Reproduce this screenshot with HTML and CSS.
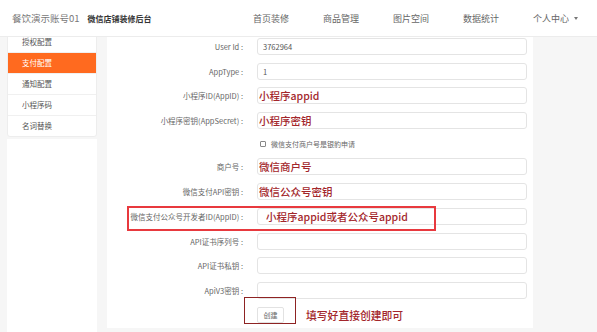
FILE: index.html
```html
<!DOCTYPE html>
<html lang="zh-CN">
  <head>
    <meta charset="UTF-8" />
    <title>支付配置</title>
    <link rel="stylesheet" href="styles.css">
  </head>
  <body>
    <div class="header">
      <span class="brand">餐饮演示账号01</span>
      <span class="brand-sub">微信店铺装修后台</span>
      <div class="nav">
        <a>首页装修</a>
        <a>商品管理</a>
        <a>图片空间</a>
        <a>数据统计</a>
        <a class="dropdown">个人中心<i class="caret"></i></a>
      </div>
    </div>
    <div class="layout">
      <div class="sidebar">
        <div class="menu-wrap">
          <ul class="menu">
            <li>授权配置</li>
            <li class="active">支付配置</li>
            <li>通知配置</li>
            <li>小程序码</li>
            <li>名词替换</li>
          </ul>
        </div>
        <div class="sidebar-fill"></div>
      </div>
      <div class="main">
        <div class="row">
          <label>User Id :</label>
          <input type="text" value="3762964" />
        </div>
        <div class="row">
          <label>AppType :</label>
          <input type="text" value="1" />
        </div>
        <div class="row">
          <label>小程序ID(AppID) :</label>
          <input type="text" class="note" value="小程序appid" />
        </div>
        <div class="row">
          <label>小程序密钥(AppSecret) :</label>
          <input type="text" class="note" value="小程序密钥" />
        </div>
        <div class="row check-row">
          <input type="checkbox" class="check" />
          <span>微信支付商户号是银豹申请</span>
        </div>
        <div class="row">
          <label>商户号 :</label>
          <input type="text" class="note" value="微信商户号" />
        </div>
        <div class="row">
          <label>微信支付API密钥 :</label>
          <input type="text" class="note" value="微信公众号密钥" />
        </div>
        <div class="row">
          <label>微信支付公众号开发者ID(AppID) :</label>
          <input type="text" class="note wide" value="小程序appid或者公众号appid" />
        </div>
        <div class="row">
          <label>API证书序列号 :</label>
          <input type="text" />
        </div>
        <div class="row">
          <label>API证书私钥 :</label>
          <input type="text" />
        </div>
        <div class="row">
          <label>ApiV3密钥 :</label>
          <input type="text" />
        </div>
        <div class="row button-row">
          <button class="btn">创建</button>
          <span class="hint">填写好直接创建即可</span>
        </div>

        <div class="mark mark-red"></div>
        <div class="mark mark-dark"></div>
      </div>
    </div>
  </body>
</html>
```

FILE: styles.css
```css
body {
  margin: 0;
  height: 332px;
  overflow: hidden;
  background: #f6f6f6;
  font-family: "Noto Sans CJK SC", "Noto Sans", sans-serif;
  color: #555;
}
.header {
  height: 36px;
  background: #fff;
  border-bottom: 1px solid #ececec;
  display: flex;
  align-items: center;
}
.brand {
  margin-left: 12px;
  font-size: 9.5px;
  color: #777;
}
.brand-sub {
  margin-left: 8px;
  font-size: 8px;
  font-weight: bold;
  color: #333;
}
.nav {
  margin-left: auto;
  margin-right: 19px;
  display: flex;
  gap: 34px;
}
.nav a {
  font-size: 9px;
  color: #666;
  display: flex;
  align-items: center;
}
.caret {
  margin-left: 5px;
  border-left: 2.5px solid transparent;
  border-right: 2.5px solid transparent;
  border-top: 3px solid #777;
}
.layout {
  display: flex;
  height: 295px;
}
.sidebar {
  width: 90px;
  margin-left: 7px;
  display: flex;
  flex-direction: column;
}
.menu-wrap {
  overflow: hidden;
}
.menu {
  list-style: none;
  margin: -6px 0 0;
  padding: 0;
  background: #fff;
  border: 1px solid #ededed;
  border-radius: 3px;
}
.menu li {
  height: 20px;
  line-height: 20px;
  padding-left: 14px;
  font-size: 7.5px;
  color: #555;
  border-bottom: 1px solid #f0f0f0;
}
.menu li:last-child {
  border-bottom: none;
}
.menu li.active {
  background: #ff6a1f;
  color: #fff;
}
.sidebar-fill {
  flex: 1;
  margin-top: 2px;
  background: #fff;
}
.main {
  position: relative;
  margin-left: 10px;
  width: 426px;
  height: 291px;
  padding-top: 1px;
  box-sizing: border-box;
  background: #fff;
}
.row {
  display: flex;
  align-items: center;
  height: 17px;
  margin-bottom: 7.7px;
}
.row label {
  width: 136px;
  margin-right: 14px;
  text-align: right;
  font-size: 7.5px;
  color: #666;
  white-space: nowrap;
}
.row input[type="text"] {
  width: 270px;
  height: 17px;
  box-sizing: border-box;
  border: 1px solid #e4e4e4;
  border-radius: 3px;
  padding: 0 5px;
  font-family: inherit;
  font-size: 7.5px;
  color: #555;
  outline: none;
}
.row input.note {
  padding: 0 1px;
  font-size: 10.5px;
  font-weight: 500;
  color: #a3262b;
}
.row input.note.wide {
  padding: 0 8px;
}
.check-row {
  height: 14px;
  padding-left: 153px;
  font-size: 7px;
  color: #666;
}
.check {
  appearance: none;
  width: 6px;
  height: 6px;
  margin: 0 5px 0 0;
  border: 1px solid #888;
  border-radius: 1px;
  background: #fff;
}
.button-row {
  height: 16px;
  padding-left: 150px;
}
.btn {
  width: 27px;
  height: 16px;
  padding: 0;
  background: #fff;
  border: 1px solid #e2e2e2;
  border-radius: 2px;
  font-family: inherit;
  font-size: 7px;
  color: #666;
}
.hint {
  margin-left: 22px;
  font-size: 10.8px;
  font-weight: 500;
  color: #a3262b;
}
.mark {
  position: absolute;
  box-sizing: border-box;
}
.mark-red {
  left: 20px;
  top: 169px;
  width: 309px;
  height: 25px;
  border: 2px solid #e8393e;
}
.mark-dark {
  left: 137px;
  top: 260px;
  width: 52px;
  height: 27px;
  border: 1.5px solid #8e2323;
}
```
